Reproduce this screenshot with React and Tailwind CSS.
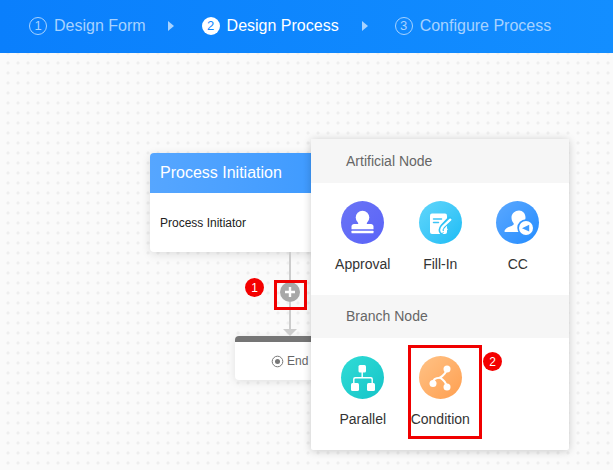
const StampIcon = () => (
  <svg width="43" height="43" viewBox="0 0 43 43" fill="#fff">
    <circle cx="21.500" cy="16.500" r="6.800" />
    <path d="M18 20h7l1 3h4c1.300 0 2.500 1 2.500 2.300v3H10.500v-3c0-1.300 1.200-2.300 2.500-2.300h4z" />
    <rect x="10.500" y="29.800" width="22" height="2.500" rx=".5" />
  </svg>
)

const FillIcon = () => (
  <svg width="42" height="42" viewBox="0 0 42 42">
    <rect x="11" y="11.500" width="17" height="20.500" rx="2" fill="#fff" />
    <path d="M14.500 17h8M14.500 20.500h5" stroke="#3cc4f6" strokeWidth="1.500" strokeLinecap="round" />
    <path d="M22.500 29.500c-1-1.500-.3-3 1-4.800l7-7.500" fill="none" stroke="#2fc4f6" strokeWidth="5" strokeLinecap="round" />
    <path d="M22.800 29.500c-1-1.500-.3-3 1-4.800l7.500-7" fill="none" stroke="#fff" strokeWidth="2.400" strokeLinecap="round" />
    <path d="M23 29.800c2 .3 3.800-.8 5-2.500" fill="none" stroke="#fff" strokeWidth="1.400" strokeLinecap="round" />
  </svg>
)

const CcIcon = () => (
  <svg width="43" height="43" viewBox="0 0 43 43">
    <path d="M23 9.500c3.800 0 6.500 3 6.500 7 0 2.500-.9 4.500-2.300 6-.9 1-.6 2 .6 2.600l2 1-7 5H9.500c-.9 0-1.300-.6-1-1.300.8-2.100 2.700-3.300 5.500-4.300 2.800-1 4.200-1.800 3.600-3.200-1.300-1.500-2.100-3.400-2.100-5.800 0-4 3.700-7 7.500-7z" fill="#fff" />
    <circle cx="30" cy="27" r="8.700" fill="#3495ff" />
    <circle cx="30" cy="27" r="7" fill="#fff" />
    <path d="M26 27.200l7.200-3.400v6.600z" fill="#3f9bff" />
  </svg>
)

const ParallelIcon = () => (
  <svg width="42" height="42" viewBox="0 0 42 42" fill="#fff">
    <rect x="16.500" y="8" width="7.500" height="7.500" rx="1.500" />
    <rect x="9" y="26" width="8" height="8" rx="1.500" />
    <rect x="25" y="26" width="8" height="8" rx="1.500" />
    <path d="M19.500 15h1.400v5h8a2 2 0 0 1 2 2v4h-1.400v-3.500a1.100 1.100 0 0 0-1.100-1.100H13.600a1.100 1.100 0 0 0-1.100 1.100V26h-1.400v-4a2 2 0 0 1 2-2h6.400z" />
  </svg>
)

const ConditionIcon = () => (
  <svg width="42" height="42" viewBox="0 0 42 42">
    <g fill="none" stroke="#fff" strokeWidth="2">
      <path d="M28 12c-1 4-3.500 6.500-7 8.700 3.500 2 6 5 7 9.300" />
      <path d="M14 26c0-3.500 2.500-5.300 7-5.300" />
    </g>
    <g fill="#fff">
      <circle cx="28" cy="12" r="3.500" />
      <circle cx="28" cy="30" r="3.500" />
      <circle cx="14" cy="26.500" r="3.500" />
    </g>
  </svg>
)

const Badge = ({ n, className }) => (
  <div className={`absolute flex h-[19px] w-[19px] items-center justify-center rounded-full bg-[#f40000] text-xs text-white ${className}`}>
    {n}
  </div>
)

const Step = ({ n, label, active }) => (
  <div className={`flex items-center gap-[7px] ${active ? 'text-white' : 'text-[#a6d2ff]'}`}>
    <span
      className={`flex h-[18px] w-[18px] items-center justify-center rounded-full text-[13px] ${
        active ? 'bg-white text-[#0f85fe]' : 'border border-[#a6d2ff]'
      }`}
    >
      {n}
    </span>
    <span className="text-base">{label}</span>
  </div>
)

const Arrow = () => (
  <div className="h-0 w-0 border-y-[5px] border-l-[6px] border-y-transparent border-l-[#a6d2ff]" />
)

const NodeItem = ({ label, circle, children }) => (
  <div className="flex flex-col items-center">
    <div className={`flex h-[43px] w-[43px] items-center justify-center rounded-full ${circle}`}>
      {children}
    </div>
    <span className="mt-3 text-sm leading-[16px] text-[#333]">{label}</span>
  </div>
)

const SectionTitle = ({ children, className }) => (
  <div className={`flex items-center bg-[#f6f6f6] pl-[35px] text-sm text-[#666] ${className}`}>{children}</div>
)

export default function App() {
  return (
    <div className="h-[470px] w-[613px] overflow-hidden bg-[#fafafa] font-['Liberation_Sans',Arial,sans-serif]">
      {/* header steps */}
      <div className="flex h-[53px] items-center bg-gradient-to-r from-[#0a7ffc] to-[#138eff] pb-[2px] pl-[29px]">
        <Step n="1" label="Design Form" />
        <div className="ml-[22px] mr-[28px]"><Arrow /></div>
        <Step n="2" label="Design Process" active />
        <div className="ml-[23px] mr-[27px]"><Arrow /></div>
        <Step n="3" label="Configure Process" />
      </div>

      {/* canvas */}
      <div className="relative h-[417px] bg-[radial-gradient(circle,#eeeeee_1.3px,transparent_1.8px)] bg-[size:10px_10px] bg-[position:3px_-5px]">
        <div className="flex w-[580px] flex-col items-center pt-[100px]">
          <div className="w-[280px] overflow-hidden rounded-[4px] bg-white shadow-[0_2px_10px_rgba(0,0,0,0.12)]">
            <div className="flex h-[40px] items-center bg-gradient-to-r from-[#56a6ff] to-[#2c93ff] pl-[10px] text-base text-white">
              Process Initiation
            </div>
            <div className="flex h-[59px] items-center pl-[10px] text-xs text-[#222]">Process Initiator</div>
          </div>

          <div className="relative flex flex-col items-center">
            <div className="h-[30px] w-[2px] bg-[#cccccc]" />
            <div className="flex h-[20px] w-[20px] items-center justify-center rounded-full bg-[#a8a8a8]">
              <svg width="12" height="12" viewBox="0 0 12 12">
                <path d="M6 1v10M1 6h10" stroke="#fff" strokeWidth="2.400" />
              </svg>
            </div>
            <div className="h-[27px] w-[2px] bg-[#cccccc]" />
            <div className="h-0 w-0 border-x-[7px] border-t-[7px] border-x-transparent border-t-[#cccccc]" />
            <div className="absolute left-[-6px] top-[28px] h-[30px] w-[33px] border-[3px] border-[#f00000]" />
            <Badge n="1" className="left-[-35px] top-[26px]" />
          </div>

          <div className="w-[110px] overflow-hidden rounded-[4px] bg-white shadow-[0_2px_8px_rgba(0,0,0,0.1)]">
            <div className="h-[6px] bg-[#757575]" />
            <div className="flex h-[38px] items-center gap-[3px] pl-[36px] text-xs text-[#666]">
              <svg width="13" height="13" viewBox="0 0 13 13">
                <circle cx="6.500" cy="6.500" r="5.300" fill="none" stroke="#777" strokeWidth="1" />
                <circle cx="6.500" cy="6.500" r="2.500" fill="#777" />
              </svg>
              End
            </div>
          </div>
        </div>

        {/* add-node popover */}
        <div className="absolute left-[311px] top-[86px] h-[311px] w-[258px] rounded-[2px] bg-white shadow-[0_1px_8px_rgba(0,0,0,0.2)]">
          <SectionTitle className="h-[44px]">Artificial Node</SectionTitle>
          <div className="grid h-[112px] grid-cols-[repeat(3,77.5px)] justify-items-center pl-[13px] pt-[18px]">
            <NodeItem label="Approval" circle="bg-gradient-to-br from-[#6b74f5] to-[#5a63f8]"><StampIcon /></NodeItem>
            <NodeItem label="Fill-In" circle="bg-gradient-to-br from-[#5fd6fb] to-[#12bcf5]"><FillIcon /></NodeItem>
            <NodeItem label="CC" circle="bg-gradient-to-br from-[#5aa8ff] to-[#1f8cff]"><CcIcon /></NodeItem>
          </div>
          <SectionTitle className="h-[43px] pb-[2px]">Branch Node</SectionTitle>
          <div className="grid grid-cols-[repeat(3,77.5px)] justify-items-center pl-[13px] pt-[18px]">
            <NodeItem label="Parallel" circle="bg-gradient-to-br from-[#2fdcd6] to-[#14c4c8]"><ParallelIcon /></NodeItem>
            <NodeItem label="Condition" circle="bg-gradient-to-br from-[#ffc285] to-[#ff9f4f]"><ConditionIcon /></NodeItem>
          </div>
          <div className="absolute left-[97px] top-[206px] h-[94px] w-[74px] border-[3px] border-[#f00000]" />
          <Badge n="2" className="left-[172px] top-[213px]" />
        </div>
      </div>
    </div>
  )
}
